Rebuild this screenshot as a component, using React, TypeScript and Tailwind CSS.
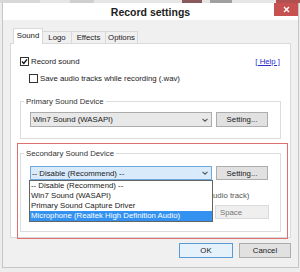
import React from "react";

function Check({ checked }: { checked?: boolean }) {
  return (
    <div className="w-[9px] h-[9px] border border-[#333] bg-white flex items-center justify-center shrink-0">
      {checked && (
        <svg width="7" height="7" viewBox="0 0 7 7">
          <path d="M1 3.6 L2.8 5.4 L6 1.4" fill="none" stroke="#111" strokeWidth="1.4" />
        </svg>
      )}
    </div>
  );
}

function Chevron() {
  return (
    <svg width="6" height="4" viewBox="0 0 6 4" className="shrink-0">
      <path d="M0.5 0.8 L3 3.2 L5.5 0.8" fill="none" stroke="#555" strokeWidth="1.1" />
    </svg>
  );
}

function Btn({ label, w, h, extra }: { label: string; w: string; h: string; extra?: string }) {
  return (
    <div
      className={`${w} ${h} ${extra ?? "bg-[#e1e1e1] border-[#adadad]"} border flex items-center justify-center text-[#1a1a1a]`}
    >
      {label}
    </div>
  );
}

export default function App() {
  const items = [
    "-- Disable (Recommend) --",
    "Win7 Sound (WASAPI)",
    "Primary Sound Capture Driver",
    "Microphone (Realtek High Definition Audio)",
  ];
  return (
    <div className="w-[300px] h-[272px] overflow-hidden bg-[#ededed] font-['Liberation_Sans',Arial,sans-serif] text-[7.8px] leading-[9px] text-[#1a1a1a]">
      {/* desktop strip behind the window */}
      <div className="h-[3px] flex bg-[#e6e6e6]">
        <div className="w-[40px] bg-[#d8d8d8]" />
        <div className="w-[30px]" />
        <div className="w-[24px] bg-[#cfcfcf]" />
        <div className="w-[88px]" />
        <div className="w-[20px] bg-[#8a5a5a]" />
        <div className="w-[8px]" />
        <div className="w-[22px] bg-[#a0a0a0]" />
        <div className="w-[44px]" />
        <div className="w-[24px] bg-[#b05050]" />
      </div>

      {/* window */}
      <div className="ml-[2px] w-[297px] border-l border-r border-b border-[#c6c6c6] bg-[#f0f0f0]">
        {/* title bar */}
        <div className="relative h-[17px] bg-white flex items-center justify-center">
          <span className="text-[10.5px] font-bold leading-[17px] text-[#222] mt-[1px]">Record settings</span>
          <div className="absolute right-0 top-0 w-[24px] h-[13px] bg-[#c75050] flex items-center justify-center">
            <svg width="7" height="7" viewBox="0 0 7 7">
              <path d="M1 1 L6 6 M6 1 L1 6" stroke="#fff" strokeWidth="1.4" />
            </svg>
          </div>
        </div>

        {/* body */}
        <div className="h-[247px] pl-[7px] pr-[7px] pt-[8px]">
          {/* tabs */}
          <div className="flex items-end h-[15px] ml-[3px]">
            <div className="relative z-10 w-[30px] h-[16px] -mb-px bg-white border border-b-0 border-[#d9d9d9] flex items-center justify-center pb-[2px]">
              Sound
            </div>
            <div className="w-[30px] h-[12px] -ml-px bg-[#f0f0f0] border border-b-0 border-[#d9d9d9] flex items-center justify-center">
              Logo
            </div>
            <div className="w-[35px] h-[12px] -ml-px bg-[#f0f0f0] border border-b-0 border-[#d9d9d9] flex items-center justify-center">
              Effects
            </div>
            <div className="w-[33px] h-[12px] -ml-px bg-[#f0f0f0] border border-b-0 border-[#d9d9d9] flex items-center justify-center">
              Options
            </div>
          </div>

          {/* panel */}
          <div className="w-[281px] h-[195px] bg-white border border-[#d9d9d9] pt-[13px]">
            <div className="h-[9px] flex items-center justify-between pl-[9px] pr-[10px]">
              <div className="flex items-center">
                <Check checked />
                <span className="ml-[2px]">Record sound</span>
              </div>
              <span className="text-[#2b2bd0] underline">[ Help ]</span>
            </div>
            <div className="mt-[8px] h-[9px] flex items-center pl-[18px]">
              <Check />
              <span className="ml-[2px]">Save audio tracks while recording (.wav)</span>
            </div>

            {/* primary group */}
            <fieldset className="mt-[14px] ml-[9px] w-[261px] border border-[#dcdcdc] pb-[11px]">
              <legend className="ml-[3px] px-[2px] leading-[9px] text-[#333]">Primary Sound Device</legend>
              <div className="mt-[6px] pl-[9px] flex gap-[4px]">
                <div className="w-[182px] h-[15px] bg-[#e8e8e8] border border-[#acacac] flex items-center justify-between pl-[2px] pr-[3px]">
                  <span>Win7 Sound (WASAPI)</span>
                  <Chevron />
                </div>
                <Btn label="Setting..." w="w-[52px]" h="h-[15px]" />
              </div>
            </fieldset>

            {/* secondary group with red highlight */}
            <div className="mt-[4px] ml-[6px] w-[271px] h-[96px] border border-[#e07070]">
              <fieldset className="mt-[5px] ml-[2px] w-[261px] border border-[#dcdcdc] pb-[12px]">
                <legend className="ml-[3px] px-[2px] leading-[9px] text-[#333]">Secondary Sound Device</legend>
                <div className="mt-[8px] pl-[9px] flex gap-[4px]">
                  <div className="relative w-[182px] h-[14px] bg-[#d9ebfa] border border-[#6fa8dc] flex items-center justify-between pl-[1px] pr-[3px]">
                    <span>-- Disable (Recommend) --</span>
                    <Chevron />
                    {/* open dropdown list */}
                    <div className="absolute left-[-2px] top-[13px] z-20 w-[184px] bg-white border border-[#646464]">
                      {items.map((t, i) => (
                        <div
                          key={t}
                          className={`h-[10px] leading-[10px] pl-[1px] whitespace-nowrap overflow-hidden ${
                            i === 3 ? "bg-[#3392f0] text-white" : "text-[#1a1a1a]"
                          }`}
                        >
                          {t}
                        </div>
                      ))}
                    </div>
                  </div>
                  <Btn label="Setting..." w="w-[52px]" h="h-[14px]" />
                </div>
                <div className="mt-[11px] h-[9px] pl-[192px] flex items-center text-[#555]">
                  <span className="whitespace-nowrap">udio track)</span>
                </div>
                <div className="mt-[5px] flex justify-end pr-[11px]">
                  <div className="w-[54px] h-[14px] bg-[#efefef] border border-[#dadada] flex items-center pl-[4px] text-[#777]">
                    Space
                  </div>
                </div>
              </fieldset>
            </div>
          </div>

          {/* buttons */}
          <div className="mt-[5px] w-[281px] flex justify-end gap-[6px]">
            <Btn label="OK" w="w-[54px]" h="h-[15px]" extra="bg-[#e5f1fb] border-[#5a9bd5]" />
            <Btn label="Cancel" w="w-[52px]" h="h-[15px]" />
          </div>
        </div>
      </div>
    </div>
  );
}
